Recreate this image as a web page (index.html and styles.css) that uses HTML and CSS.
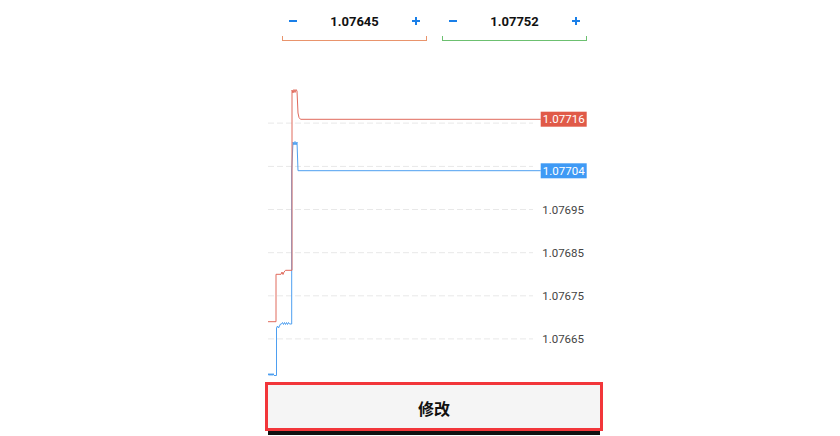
FILE: index.html
```html
<!DOCTYPE html>
<html>
<head>
    <meta charset="utf-8" />
    <title>修改</title>
    <link rel="stylesheet" href="styles.css">
</head>
<body>
    <div id="panel">
        <div class="steppers">
            <div class="stepper sell">
                <div class="row">
                    <span class="step">
                        <svg width="8" height="8" viewBox="0 0 8 8"><path d="M0 4H8" /></svg>
                    </span>
                    <span class="value">1.07645</span>
                    <span class="step">
                        <svg width="8" height="8" viewBox="0 0 8 8"><path d="M0 4H8M4 0V8" /></svg>
                    </span>
                </div>
                <div class="bracket"></div>
            </div>
            <div class="stepper buy">
                <div class="row">
                    <span class="step">
                        <svg width="8" height="8" viewBox="0 0 8 8"><path d="M0 4H8" /></svg>
                    </span>
                    <span class="value">1.07752</span>
                    <span class="step">
                        <svg width="8" height="8" viewBox="0 0 8 8"><path d="M0 4H8M4 0V8" /></svg>
                    </span>
                </div>
                <div class="bracket"></div>
            </div>
        </div>

        <svg class="chart" width="332" height="335" viewBox="0 0 332 335">
            <g class="grid">
                <line x1="0" y1="73.1" x2="265" y2="73.1" />
                <line x1="0" y1="116.4" x2="265" y2="116.4" />
                <line x1="0" y1="159.5" x2="265" y2="159.5" />
                <line x1="0" y1="202.7" x2="265" y2="202.7" />
                <line x1="0" y1="245.8" x2="265" y2="245.8" />
                <line x1="0" y1="288.9" x2="265" y2="288.9" />
            </g>
            <g class="axis">
                <text x="316" y="160.8">1.07695</text>
                <text x="316" y="204">1.07685</text>
                <text x="316" y="247.1">1.07675</text>
                <text x="316" y="290.2">1.07665</text>
            </g>
            <path class="ask" d="M0 325.5 L1 323.5 L2 325.5 L3 323.5 L4 325.5 L5 323.5 L6 325.5 L8.5 325.5 L8.5 278 L9.5 276 L10.5 278 L11.5 276 L12.5 274 L13.5 274 L14.5 272.5 L15.5 274.5 L16.5 272.5 L17.5 274.5 L18.5 272.5 L19.5 274.5 L20.5 272.5 L21.5 274 L23.7 274 L23.7 120 L25 92 L26 95 L27 91.5 L28 95 L29 92 L30 120.7 L272.7 120.7" />
            <path class="bid" d="M0 271.7 L8 271.7 L8 224.3 L13 224.3 L14 222 L15 224.5 L16 222 L17 221 L17.5 220.3 L24 220.3 L24 40 L25 43 L26 39.5 L27 42.5 L28 39.5 L29 41 L30 63 L31 67.5 L32.5 69.3 L272.7 69.3" />
            <rect class="tag-bid" x="272.7" y="61.7" width="46" height="15" />
            <text class="tag-text" x="295.7" y="70">1.07716</text>
            <rect class="tag-ask" x="272.7" y="113.3" width="46" height="15" />
            <text class="tag-text" x="295.7" y="121.6">1.07704</text>
        </svg>

        <button class="modify" type="button">修改</button>
        <div class="base"></div>
    </div>
</body>
</html>
```

FILE: styles.css
```css
body {
    margin: 0;
    background-color: #ffffff;
    font-family: Roboto, "Noto Sans CJK SC", sans-serif;
}
#panel {
    width: 332px;
    margin-left: 268px;
    padding-bottom: 1px;
    display: flex;
    flex-direction: column;
}
.steppers {
    height: 50px;
    display: flex;
    gap: 15px;
    padding-left: 14px;
}
.stepper {
    width: 145px;
    padding-top: 10px;
}
.row {
    height: 22px;
    display: flex;
    align-items: center;
    justify-content: space-between;
    padding: 0 7px;
}
.step {
    width: 8px;
    height: 8px;
    display: flex;
}
.step svg {
    stroke: #1a7fe8;
    stroke-width: 2;
    fill: none;
}
.value {
    font-size: 13px;
    font-weight: bold;
    color: #111111;
}
.bracket {
    height: 4px;
    margin-top: 4px;
    border: 1px solid;
    border-top: none;
}
.sell .bracket {
    border-color: #e9946c;
}
.buy .bracket {
    border-color: #6cc070;
}
.chart {
    display: block;
}
.grid line {
    stroke: #e8e8e8;
    stroke-width: 1;
    stroke-dasharray: 6 3;
}
.axis text {
    font-family: Roboto, sans-serif;
    font-size: 11.5px;
    fill: #444444;
    text-anchor: end;
    dominant-baseline: middle;
}
.ask, .bid {
    fill: none;
    stroke-width: 1;
}
.ask {
    stroke: #4e9ff0;
}
.bid {
    stroke: #e06a5c;
}
.tag-bid {
    fill: #e05a48;
}
.tag-ask {
    fill: #3f9af5;
}
.tag-text {
    font-family: Roboto, sans-serif;
    font-size: 11.5px;
    fill: #ffffff;
    text-anchor: middle;
    dominant-baseline: middle;
}
.modify {
    height: 43px;
    width: 332px;
    border: none;
    padding: 3px 0 0;
    background-color: #f5f5f5;
    outline: 3px solid #f2363a;
    font-family: "Noto Sans CJK SC", sans-serif;
    font-size: 16px;
    font-weight: bold;
    color: #111111;
}
.base {
    height: 4px;
    margin-top: 3px;
    background-color: #111111;
}
```
